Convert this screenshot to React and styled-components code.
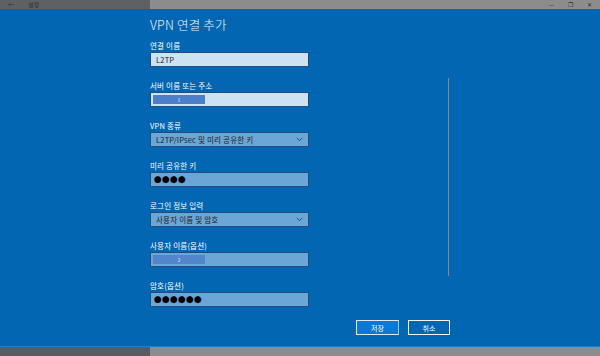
import React from 'react';
import styled, { createGlobalStyle } from 'styled-components';

const GlobalStyle = createGlobalStyle`
  html, body {
    margin: 0;
    padding: 0;
    background: #0366b3;
  }
  * {
    box-sizing: border-box;
  }
`;

const Page = styled.div`
  width: 600px;
  height: 356px;
  display: flex;
  flex-direction: column;
  font-family: "Noto Sans CJK KR", "Noto Sans", sans-serif;
  overflow: hidden;
`;

const WindowBar = styled.div`
  display: grid;
  grid-template-columns: 150px 1fr;
  height: ${(p) => p.$height}px;
  flex-shrink: 0;
  border-top: ${(p) => (p.$bottom ? '1px solid #2a7cc0' : 'none')};
`;

const BarLeft = styled.div`
  background: ${(p) => (p.$bottom ? '#585b5f' : '#5d6064')};
  display: flex;
  align-items: center;
  gap: 14px;
  padding-left: 8px;
`;

const BarRight = styled.div`
  background: #8c8c8c;
  display: flex;
  align-items: center;
  justify-content: flex-end;
  gap: 14px;
  padding-right: 8px;
`;

const BarText = styled.span`
  font-size: 6px;
  line-height: 9px;
  color: #2e2f30;
`;

const Main = styled.div`
  flex: 1;
  background: #0366b3;
  display: flex;
  flex-direction: column;
`;

const Body = styled.div`
  display: flex;
  padding-left: 150px;
`;

const Form = styled.div`
  width: 159px;
  display: flex;
  flex-direction: column;
`;

const Title = styled.h1`
  margin: 7px 0 6px;
  font-size: 12.5px;
  line-height: 18px;
  font-weight: 300;
  color: #eef4fa;
  letter-spacing: 0.2px;
`;

const Field = styled.div`
  display: flex;
  flex-direction: column;
  margin-bottom: 13px;
  &:last-child {
    margin-bottom: 0;
  }
`;

const Label = styled.label`
  font-size: 7.5px;
  line-height: 11px;
  color: #ffffff;
  margin-bottom: 1px;
  letter-spacing: 0.2px;
`;

const Box = styled.div`
  height: 15px;
  display: flex;
  align-items: center;
  padding: 0 2px;
  background: ${(p) => (p.$light ? '#cde2f3' : '#6ba6d6')};
  border: 1px solid ${(p) => (p.$light ? '#1c4f82' : '#1f4e7c')};
  font-size: 7.5px;
  color: #1a1a1a;
`;

const BoxText = styled.span`
  padding-left: 3px;
  flex: 1;
  letter-spacing: 0.2px;
`;

const Dots = styled.span`
  font-size: 7.5px;
  letter-spacing: 0.5px;
  padding-left: 1px;
  color: #000;
  line-height: 1;
`;

const Selection = styled.span`
  width: 52px;
  height: 9px;
  background: ${(p) => p.$tone};
  display: flex;
  align-items: center;
  justify-content: center;
  font-size: 4.5px;
  color: #e8f0fa;
`;

const Chevron = styled.svg`
  width: 7px;
  height: 5px;
  margin-right: 3px;
`;

const Scrollbar = styled.div`
  width: 1px;
  height: 198px;
  margin-top: 69px;
  margin-left: 139px;
  background: #8a8a8a;
`;

const Footer = styled.div`
  display: flex;
  gap: 9px;
  padding-left: 356px;
  margin-top: 13px;
`;

const Button = styled.button`
  width: ${(p) => p.$w}px;
  height: 15px;
  padding: 0;
  font-family: inherit;
  font-size: 7px;
  color: #ffffff;
  background: ${(p) => (p.$primary ? '#0a78d6' : 'transparent')};
  border: 1px solid ${(p) => (p.$primary ? '#dfe9f3' : '#f2f6fa')};
  border-right-color: ${(p) => (p.$primary ? '#9cc4e8' : '#f2f6fa')};
  cursor: pointer;
`;

function Arrow() {
  return (
    <Chevron viewBox="0 0 7 5">
      <path d="M0.8 1 L3.5 3.7 L6.2 1" fill="none" stroke="#1d3550" strokeWidth="0.8" />
    </Chevron>
  );
}

const fields = [
  { label: '연결 이름', kind: 'text', light: true, value: 'L2TP' },
  { label: '서버 이름 또는 주소', kind: 'hidden', light: true, value: '1', tone: '#4b7fc8' },
  { label: 'VPN 종류', kind: 'select', value: 'L2TP/IPsec 및 미리 공유한 키' },
  { label: '미리 공유한 키', kind: 'dots', value: '●●●●' },
  { label: '로그인 정보 입력', kind: 'select', value: '사용자 이름 및 암호' },
  { label: '사용자 이름(옵션)', kind: 'hidden', value: '2', tone: '#5286cc' },
  { label: '암호(옵션)', kind: 'dots', value: '●●●●●●' },
];

function FieldBox({ field }) {
  if (field.kind === 'hidden') {
    return (
      <Box $light={field.light}>
        <Selection $tone={field.tone}>{field.value}</Selection>
      </Box>
    );
  }
  if (field.kind === 'dots') {
    return (
      <Box>
        <Dots>{field.value}</Dots>
      </Box>
    );
  }
  return (
    <Box $light={field.light}>
      <BoxText>{field.value}</BoxText>
      {field.kind === 'select' && <Arrow />}
    </Box>
  );
}

export default function App() {
  return (
    <>
      <GlobalStyle />
      <Page>
        <WindowBar $height={9}>
          <BarLeft>
            <BarText>←</BarText>
            <BarText>설정</BarText>
          </BarLeft>
          <BarRight>
            <BarText>—</BarText>
            <BarText>❐</BarText>
            <BarText>✕</BarText>
          </BarRight>
        </WindowBar>
        <Main>
          <Body>
            <Form>
              <Title>VPN 연결 추가</Title>
              {fields.map((f) => (
                <Field key={f.label}>
                  <Label>{f.label}</Label>
                  <FieldBox field={f} />
                </Field>
              ))}
            </Form>
            <Scrollbar />
          </Body>
          <Footer>
            <Button $primary $w={43}>저장</Button>
            <Button $w={42}>취소</Button>
          </Footer>
        </Main>
        <WindowBar $height={10} $bottom>
          <BarLeft $bottom />
          <BarRight />
        </WindowBar>
      </Page>
    </>
  );
}
